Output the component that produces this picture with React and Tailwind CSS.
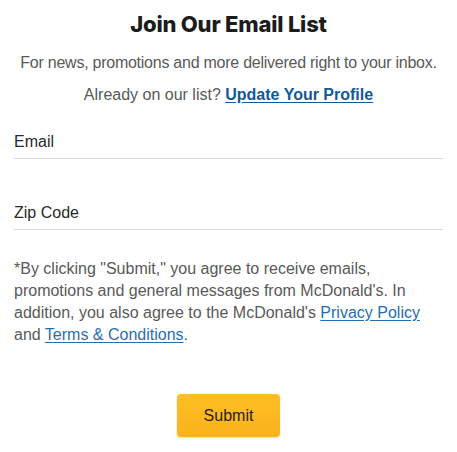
export default function App() {
  return (
    <div className="w-[457px] h-[452px] bg-white px-[14px] pt-[10px] font-['Liberation_Sans',sans-serif] text-[#555]">
      <h1 className="text-center text-[22px] leading-[28px] font-extrabold text-[#1c1c1c] font-['Inter',sans-serif] tracking-[-0.2px]">
        Join Our Email List
      </h1>
      <p className="mt-[14px] whitespace-nowrap text-center text-[16px] leading-[22px] tracking-[-0.25px] text-[#595959]">
        For news, promotions and more delivered right to your inbox.
      </p>
      <p className="mt-[10px] text-center text-[16px] leading-[22px] text-[#595959]">
        Already on our list?{" "}
        <a href="#" className="font-bold text-[#0e5a9c] underline underline-offset-2">
          Update Your Profile
        </a>
      </p>

      <div className="mt-[25px] border-b border-[#d6d8de] pb-[5px]">
        <label className="block text-[16px] leading-[22px] text-[#292929]">Email</label>
      </div>
      <div className="mt-[43px] border-b border-[#d6d8de] pb-[5px]">
        <label className="block text-[16px] leading-[22px] text-[#292929]">Zip Code</label>
      </div>

      <p className="mt-[28px] text-[16px] leading-[22px] text-[#595959]">
        *By clicking "Submit," you agree to receive emails, promotions and general messages from McDonald's. In addition, you also agree to the McDonald's{" "}
        <a href="#" className="text-[#1f6fb2] underline underline-offset-2">Privacy Policy</a>
        <br />
        and{" "}
        <a href="#" className="text-[#1f6fb2] underline underline-offset-2">Terms &amp; Conditions</a>.
      </p>

      <div className="mt-[48px] flex justify-center">
        <button className="w-[103px] h-[43px] rounded-[4px] bg-gradient-to-b from-[#ffbe24] to-[#f9b31c] text-[16px] text-[#1f1f1f] shadow-[0_1px_2px_rgba(0,0,0,0.15)]">
          Submit
        </button>
      </div>
    </div>
  );
}
